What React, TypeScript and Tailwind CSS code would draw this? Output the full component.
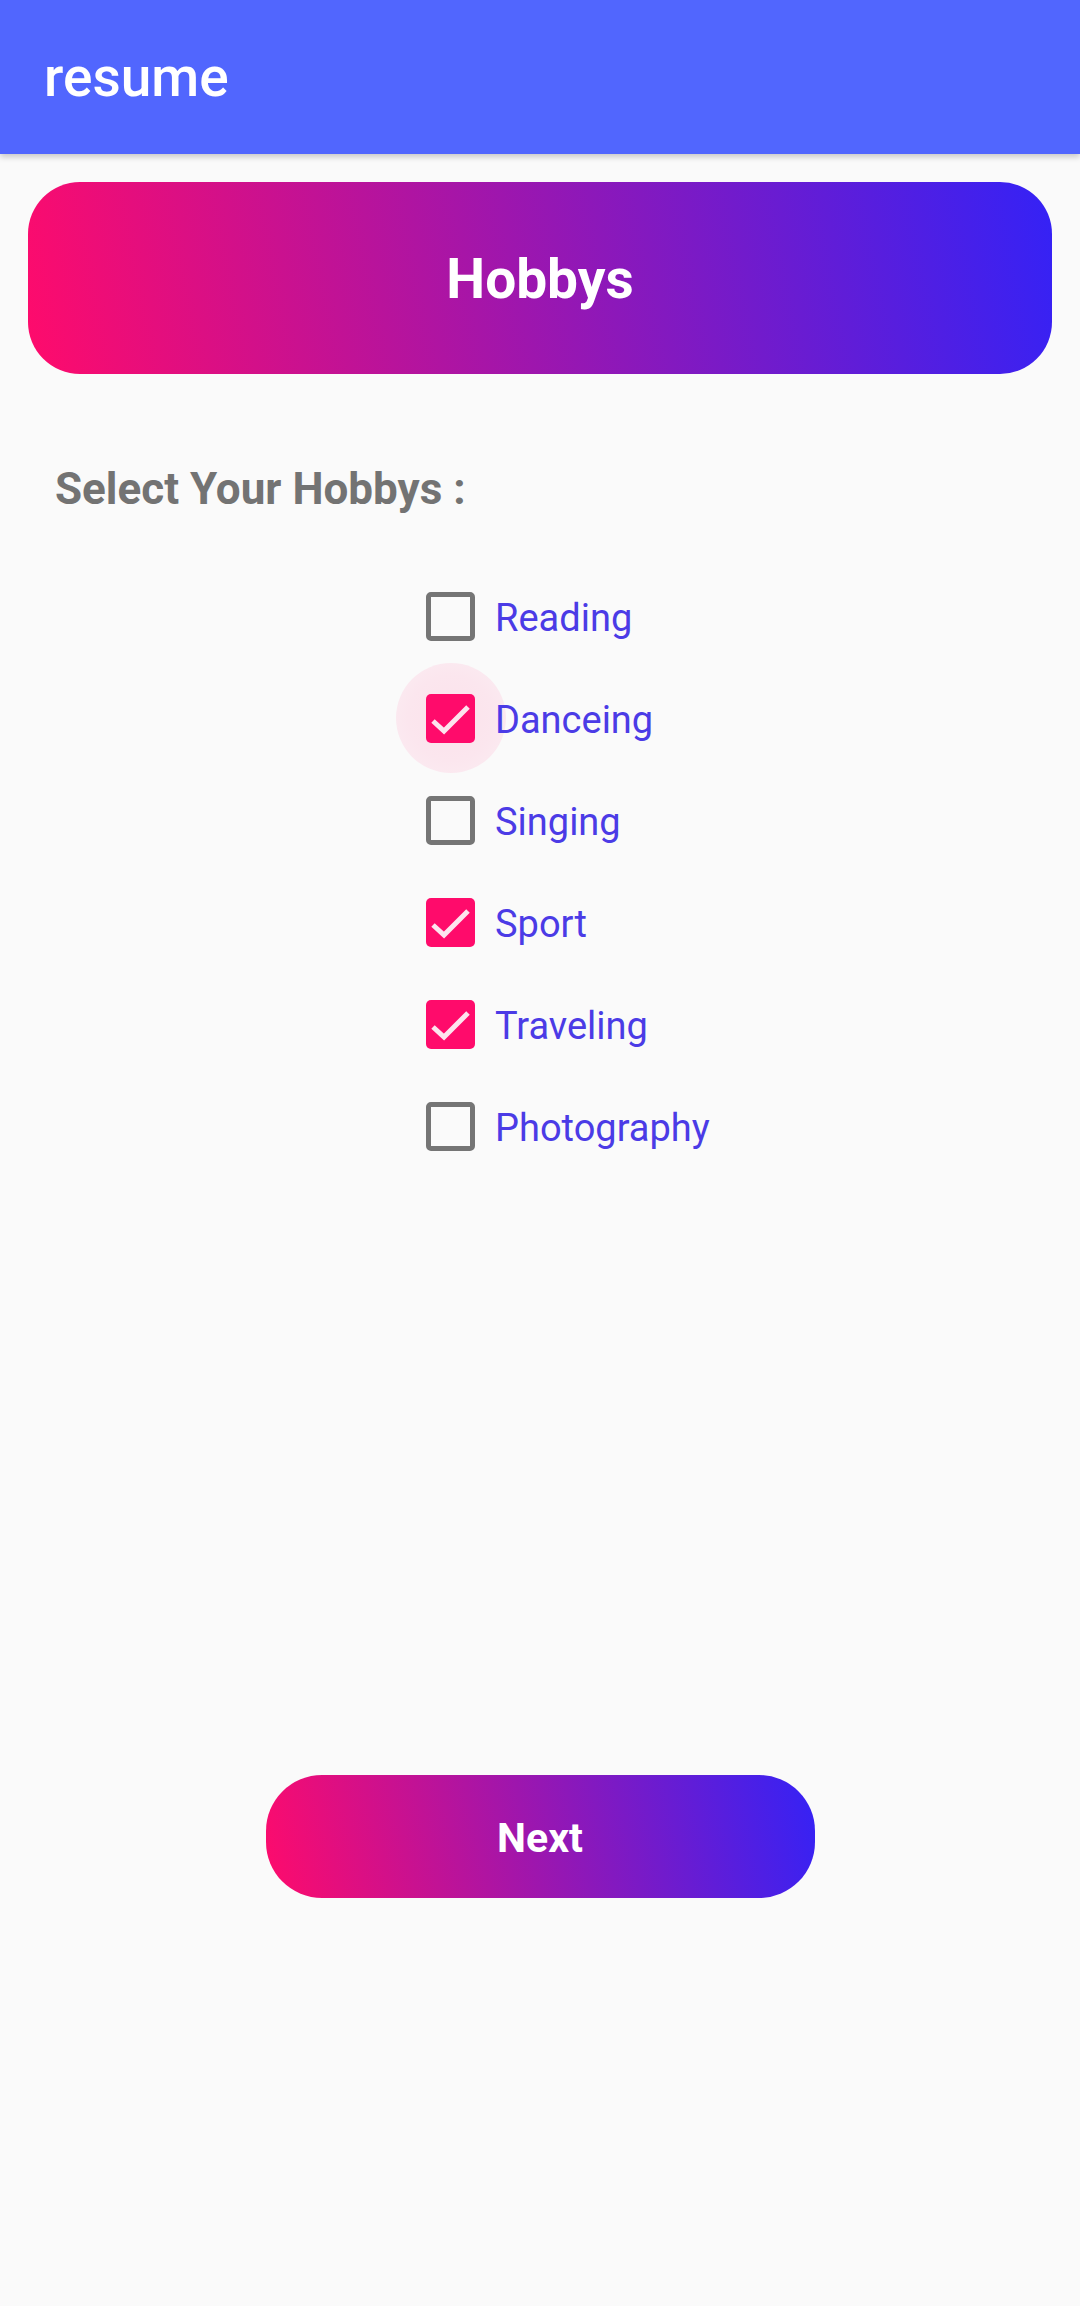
const hobbies = [
  { name: "Reading", checked: false, focused: false },
  { name: "Danceing", checked: true, focused: true },
  { name: "Singing", checked: false, focused: false },
  { name: "Sport", checked: true, focused: false },
  { name: "Traveling", checked: true, focused: false },
  { name: "Photography", checked: false, focused: false },
];

const CheckBox = ({ checked, focused }: { checked: boolean; focused: boolean }) => {
  return (
    <div className="relative flex h-[49px] w-[49px] items-center justify-center">
      {focused && (
        <div className="absolute left-1/2 top-1/2 h-[110px] w-[110px] -translate-x-1/2 -translate-y-1/2 rounded-full bg-[radial-gradient(circle,#fbe2eb_0%,#fbe6ee_55%,#fbeef3_100%)]" />
      )}
      {checked ? (
        <div className="relative flex h-[49px] w-[49px] items-center justify-center rounded-[5px] bg-[#ff0b6b]">
          <svg viewBox="0 0 49 49" className="h-[49px] w-[49px]">
            <polyline
              points="7,27 18,37 42,13"
              fill="none"
              stroke="#fde4ee"
              strokeWidth="5"
            />
          </svg>
        </div>
      ) : (
        <div className="relative h-[49px] w-[49px] rounded-[5px] border-[5px] border-[#757575]" />
      )}
    </div>
  );
};

export default function App() {
  return (
    <div className="min-h-[2306px] bg-[#fafafa] font-['Roboto',sans-serif]">
      <div className="relative z-10 flex h-[154px] items-center bg-[#5166fe] pl-[44px] shadow-[0_3px_6px_rgba(0,0,0,0.2)]">
        <h1 className="text-[55px] font-medium leading-none text-white">resume</h1>
      </div>

      <div className="px-[28px] pt-[28px]">
        <div className="flex h-[192px] items-center justify-center rounded-[52px] bg-[linear-gradient(79deg,#ff0b6b,#3422f6)] pt-[2px]">
          <h2 className="text-[55px] font-bold leading-none text-white">Hobbys</h2>
        </div>
      </div>

      <p className="mt-[89px] pl-[55px] text-[44px] font-bold leading-[52px] text-[#737373]">
        Select Your Hobbys :
      </p>

      <div className="mt-[50px] flex flex-col pl-[426px]">
        {hobbies.map((hobby, index) => (
          <div key={index} className="flex h-[102px] items-center gap-[20px]">
            <CheckBox checked={hobby.checked} focused={hobby.focused} />
            <span className="relative pt-[3px] text-[38px] leading-none text-[#4b3be6]">{hobby.name}</span>
          </div>
        ))}
      </div>

      <div className="mt-[598px] flex justify-center">
        <button className="flex h-[123px] w-[549px] items-center justify-center rounded-[56px] bg-[linear-gradient(77deg,#ff0b6b,#3422f6)] pt-[4px] text-[41px] font-bold text-white">
          Next
        </button>
      </div>
    </div>
  );
}
